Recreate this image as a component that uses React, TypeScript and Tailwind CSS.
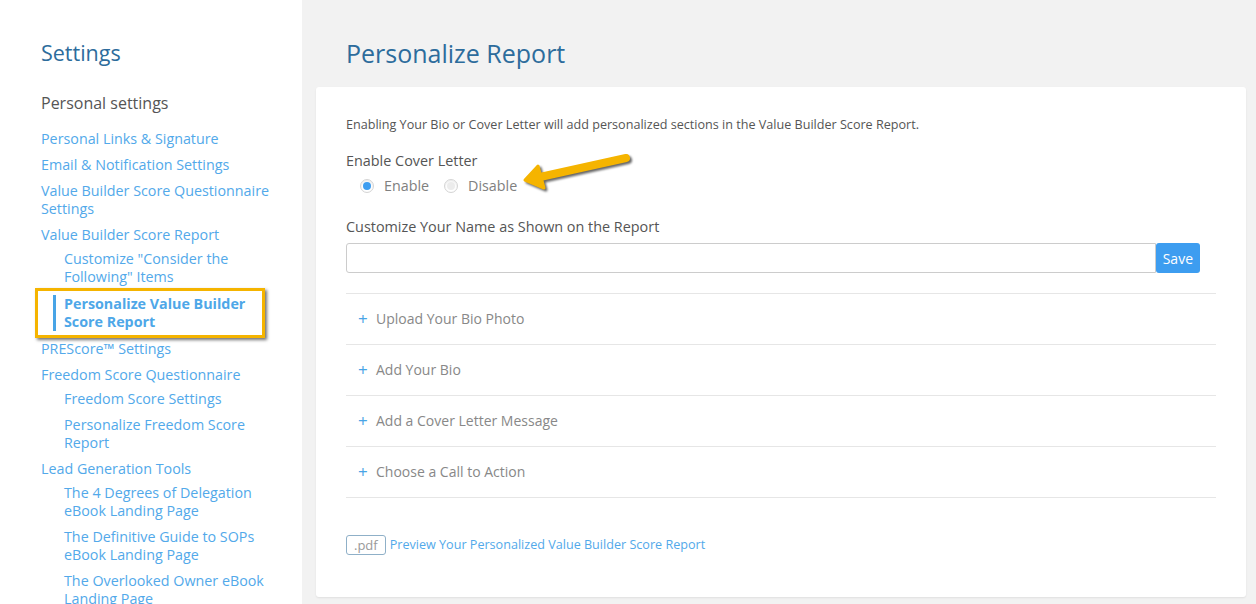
import React from "react";

type NavItem = { label: string; sub?: boolean; active?: boolean; first?: boolean };

const nav: NavItem[] = [
  { label: "Personal Links & Signature" },
  { label: "Email & Notification Settings" },
  { label: "Value Builder Score Questionnaire Settings" },
  { label: "Value Builder Score Report" },
  { label: 'Customize "Consider the Following" Items', sub: true, first: true },
  { label: "Personalize Value Builder Score Report", sub: true, active: true },
  { label: "PREScore™ Settings" },
  { label: "Freedom Score Questionnaire" },
  { label: "Freedom Score Settings", sub: true, first: true },
  { label: "Personalize Freedom Score Report", sub: true },
  { label: "Lead Generation Tools" },
  { label: "The 4 Degrees of Delegation eBook Landing Page", sub: true, first: true },
  { label: "The Definitive Guide to SOPs eBook Landing Page", sub: true },
  { label: "The Overlooked Owner eBook Landing Page", sub: true },
];

const sections = ["Upload Your Bio Photo", "Add Your Bio", "Add a Cover Letter Message", "Choose a Call to Action"];

function Sidebar() {
  return (
    <aside className="w-[302px] shrink-0 bg-white pl-[41px] pr-[18px] pt-[38px]">
      <h2 className="text-[21.5px] leading-[30px] text-[#2d6c9c]">Settings</h2>
      <h3 className="mt-[24px] text-[16px] leading-[22px] text-[#555]">Personal settings</h3>
      <ul className="mt-[16px] flex flex-col">
        {nav.map((item, i) => {
          const mt = i === 0 ? "" : item.first ? "mt-[6px]" : "mt-[8px]";
          if (item.active) {
            return (
              <li
                key={item.label}
                className="mt-[2px] -mb-[6px] -ml-[6px] w-[230px] border-[3px] border-[#f5b400] py-[4px] pl-[15px] shadow-[2px_2px_3px_rgba(0,0,0,0.55)]"
              >
                <div className="border-l-[3px] border-[#48a4e6] pl-[8px] text-[14.3px] font-bold leading-[18px] text-[#4ea7e8]">
                  Personalize Value Builder Score Report
                </div>
              </li>
            );
          }
          return (
            <li
              key={item.label}
              className={`${mt} ${item.sub ? "pl-[23px]" : ""} text-[14.3px] leading-[18px] text-[#52a9ea]`}
            >
              {item.label}
            </li>
          );
        })}
      </ul>
    </aside>
  );
}

function Radio({ checked, label }: { checked?: boolean; label: string }) {
  return (
    <label className="flex items-center gap-[10px]">
      <span className="flex h-[14px] w-[14px] items-center justify-center rounded-full border border-[#d4d4d4] bg-white shadow-[inset_0_1px_2px_rgba(0,0,0,0.1)]">
        {checked ? (
          <span className="h-[8px] w-[8px] rounded-full bg-[#3d9df0]" />
        ) : (
          <span className="h-[8px] w-[8px] rounded-full bg-[#ececec]" />
        )}
      </span>
      <span className="text-[14.3px] text-[#808080]">{label}</span>
    </label>
  );
}

function Arrow() {
  return (
    <svg
      className="absolute left-[204px] top-[62px] drop-shadow-[2px_2px_1px_rgba(0,0,0,0.6)]"
      width="116"
      height="44"
      viewBox="0 0 116 44"
    >
      <line x1="20" y1="28" x2="106" y2="9" stroke="#f5b400" strokeWidth="8" strokeLinecap="round" />
      <polygon points="5,31 18,17 24,39" fill="#f5b400" stroke="#f5b400" strokeWidth="3" strokeLinejoin="round" />
    </svg>
  );
}

export default function App() {
  return (
    <div className="flex min-h-screen bg-[#f2f2f2] font-['Open_Sans',sans-serif]">
      <Sidebar />
      <main className="flex-1 pl-[14px] pr-[10px] pt-[36px]">
        <h1 className="pl-[30px] text-[25px] leading-[34px] text-[#2d6c9c]">Personalize Report</h1>
        <div className="relative mt-[17px] h-[510px] rounded-[3px] bg-white px-[30px] pt-[29px] shadow-[0_1px_2px_rgba(0,0,0,0.08)]">
          <Arrow />
          <p className="text-[12.6px] leading-[18px] text-[#555]">
            Enabling Your Bio or Cover Letter will add personalized sections in the Value Builder Score Report.
          </p>
          <div className="mt-[17px] text-[14.4px] leading-[20px] text-[#555]">Enable Cover Letter</div>
          <div className="mt-[5px] flex h-[20px] items-center gap-[15px] pl-[14px]">
            <Radio checked label="Enable" />
            <Radio label="Disable" />
          </div>
          <div className="mt-[21px] text-[14.4px] leading-[20px] text-[#555]">
            Customize Your Name as Shown on the Report
          </div>
          <div className="mr-[16px] mt-[6px] flex h-[30px]">
            <input className="h-full flex-1 rounded-l-[3px] border border-[#ccc] px-2 text-[14px] outline-none" />
            <button className="h-full rounded-[3px] bg-[#3d9df0] px-[7px] text-[14px] text-white">Save</button>
          </div>
          <div className="mt-[20px] border-t border-[#e6e6e6]">
            {sections.map((s) => (
              <div key={s} className="flex items-center border-b border-[#e6e6e6] py-[15px] pl-[12px] leading-[20px]">
                <span className="w-[18px] text-[17px] text-[#48a4e6]">+</span>
                <span className="text-[14px] text-[#888]">{s}</span>
              </div>
            ))}
          </div>
          <div className="mt-[37px] flex items-center gap-[4px]">
            <span className="rounded-[3px] border border-[#8fb0c8] px-[7px] text-[13px] leading-[18px] text-[#999]">.pdf</span>
            <span className="text-[12.6px] text-[#52a9ea]">Preview Your Personalized Value Builder Score Report</span>
          </div>
        </div>
      </main>
    </div>
  );
}
